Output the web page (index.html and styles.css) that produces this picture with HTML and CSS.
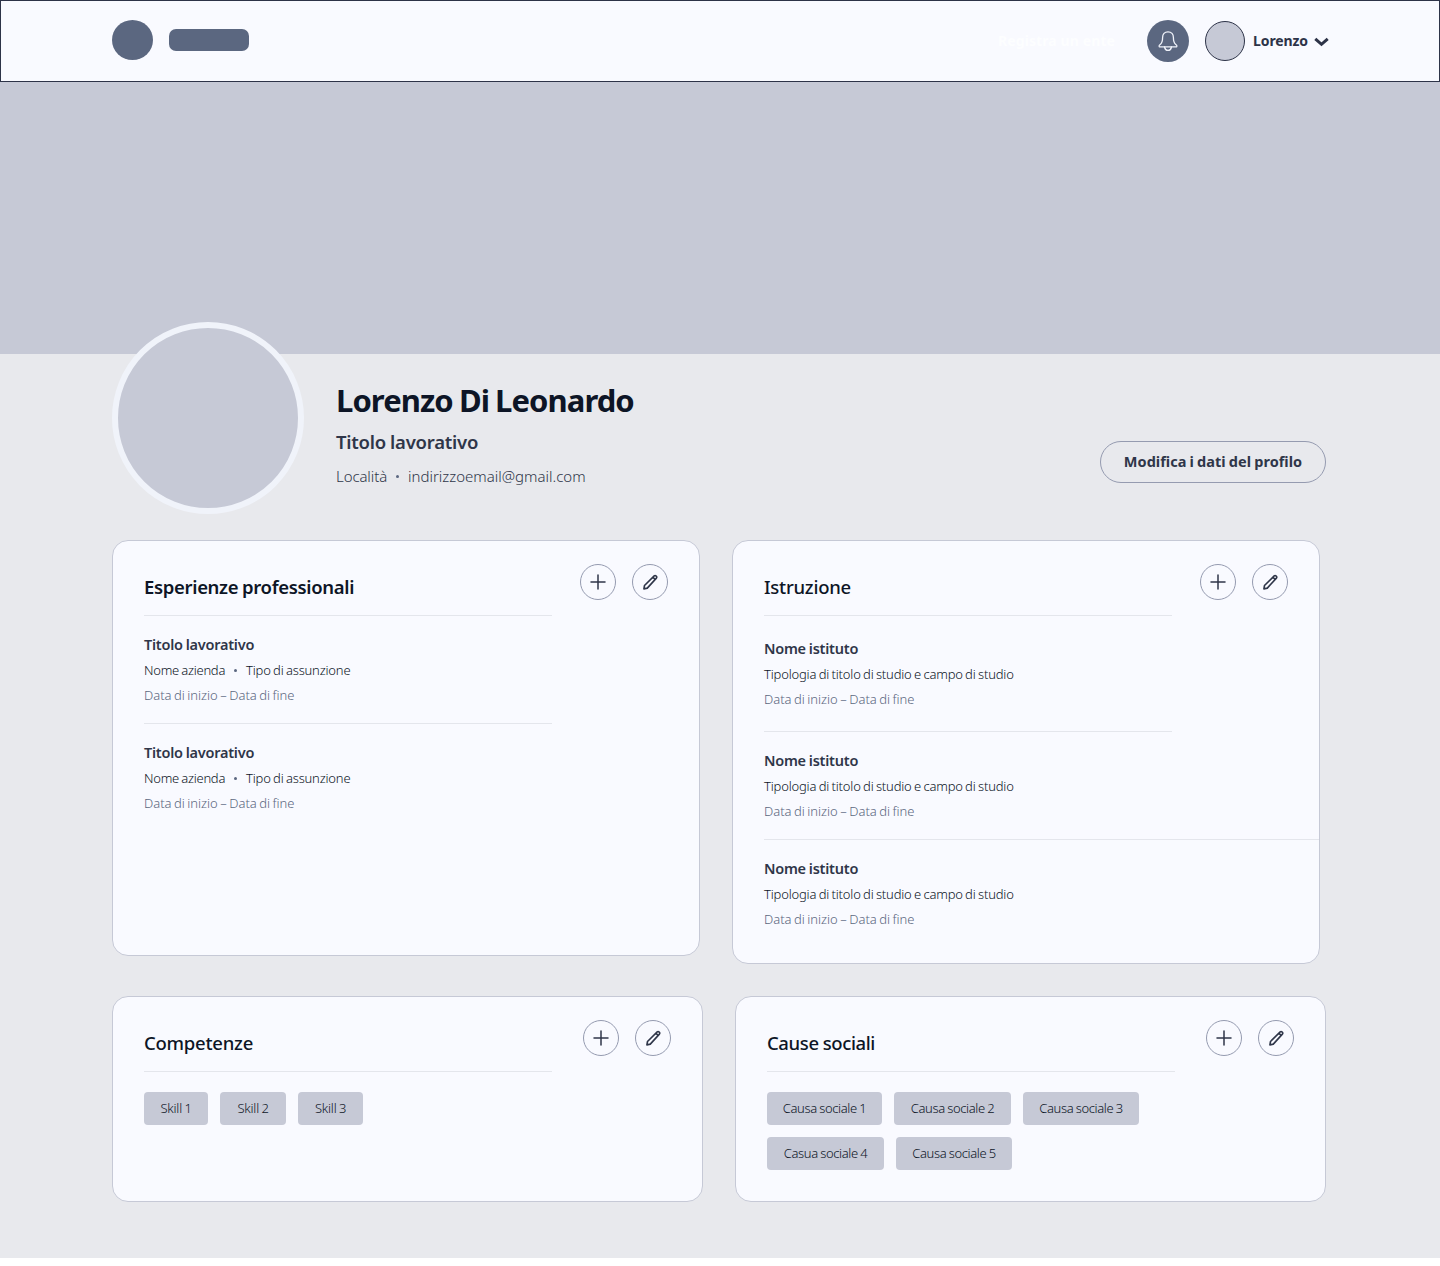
FILE: index.html
```
<!DOCTYPE html>
<html lang="it">
<head>
<meta charset="utf-8">
<title>Lorenzo Di Leonardo</title>
<link rel="stylesheet" href="styles.css">
</head>
<body>
<svg width="0" height="0" class="sprite" aria-hidden="true">
  <symbol id="plus" viewBox="0 0 16 16"><path d="M8 1v14M1 8h14" fill="none" stroke="currentColor" stroke-width="1.5" stroke-linecap="round"/></symbol>
  <symbol id="pencil" viewBox="0 0 16 16"><path d="M1.900 14.900 2.500 11.500 12.200 1.900q.9-.8 2 .2 1.100 1.100.2 2L5.300 14.100ZM11 3.300l2.100 2.100" fill="none" stroke="currentColor" stroke-width="1.600" stroke-linejoin="round" stroke-linecap="round"/></symbol>
</svg>
<header class="topbar">
  <div class="logo-mark"></div>
  <div class="logo-name"></div>
  <nav class="topnav">
    <a class="register">Registra un ente</a>
    <button class="bell" aria-label="Notifiche">
      <svg width="22" height="22" viewBox="0 0 22 22" fill="none" stroke="currentColor" stroke-width="1.3" stroke-linejoin="round" stroke-linecap="round"><path d="M11 1.800c-3.500 0-5.400 2.400-5.400 5.700 0 3.600-.5 5.500-2.400 6.900-1.500 1.100-1.400 2.500-.2 2.500h16c1.200 0 1.300-1.400-.2-2.500-1.900-1.400-2.400-3.300-2.400-6.900 0-3.300-1.900-5.700-5.400-5.700Z"/><path d="M7.500 17c.5 2.300 1.800 3.400 3.500 3.400s3-1.100 3.500-3.400"/></svg>
    </button>
    <div class="avatar-small"></div>
    <span class="user">Lorenzo</span>
    <svg class="chevron" width="16" height="10" viewBox="0 0 16 10"><path d="M2.300 1.800 8.500 7.300l6.200-5.500" fill="none" stroke="currentColor" stroke-width="3" stroke-linejoin="miter"/></svg>
  </nav>
</header>
<main class="page">
  <div class="cover"></div>
  <section class="profile">
    <div class="avatar"></div>
    <div class="identity">
      <h1>Lorenzo Di Leonardo</h1>
      <p class="role">Titolo lavorativo</p>
      <p class="contact"><span class="place">Località</span><i class="dot"></i><span>indirizzoemail@gmail.com</span></p>
    </div>
    <button class="edit">Modifica i dati del profilo</button>
  </section>

  <div class="cards">
    <section class="card jobs">
      <div class="content">
        <h2 class="strong">Esperienze professionali</h2>
        <article class="item">
          <h3>Titolo lavorativo</h3>
          <p class="line"><span class="company">Nome azienda</span><i class="dot"></i><span>Tipo di assunzione</span></p>
          <p class="dates">Data di inizio – Data di fine</p>
        </article>
        <article class="item">
          <h3>Titolo lavorativo</h3>
          <p class="line"><span class="company">Nome azienda</span><i class="dot"></i><span>Tipo di assunzione</span></p>
          <p class="dates">Data di inizio – Data di fine</p>
        </article>
      </div>
      <div class="actions">
        <button aria-label="Aggiungi"><svg width="16" height="16"><use href="#plus"/></svg></button>
        <button aria-label="Modifica"><svg width="16" height="16"><use href="#pencil"/></svg></button>
      </div>
    </section>

    <section class="card schools">
      <div class="content">
        <h2>Istruzione</h2>
        <article class="item roomy">
          <h3>Nome istituto</h3>
          <p class="line">Tipologia di titolo di studio e campo di studio</p>
          <p class="dates">Data di inizio – Data di fine</p>
        </article>
        <article class="item full">
          <h3>Nome istituto</h3>
          <p class="line">Tipologia di titolo di studio e campo di studio</p>
          <p class="dates">Data di inizio – Data di fine</p>
        </article>
        <article class="item">
          <h3>Nome istituto</h3>
          <p class="line">Tipologia di titolo di studio e campo di studio</p>
          <p class="dates">Data di inizio – Data di fine</p>
        </article>
      </div>
      <div class="actions">
        <button aria-label="Aggiungi"><svg width="16" height="16"><use href="#plus"/></svg></button>
        <button aria-label="Modifica"><svg width="16" height="16"><use href="#pencil"/></svg></button>
      </div>
    </section>
  </div>

  <div class="cards bottom">
    <section class="card">
      <div class="content">
        <h2>Competenze</h2>
        <div class="chips">
          <span class="chip w64">Skill 1</span>
          <span class="chip w66">Skill 2</span>
          <span class="chip w65">Skill 3</span>
        </div>
      </div>
      <div class="actions">
        <button aria-label="Aggiungi"><svg width="16" height="16"><use href="#plus"/></svg></button>
        <button aria-label="Modifica"><svg width="16" height="16"><use href="#pencil"/></svg></button>
      </div>
    </section>
    <section class="card">
      <div class="content">
        <h2 class="causes-title">Cause sociali</h2>
        <div class="chips causes">
          <span class="chip w115">Causa sociale 1</span>
          <span class="chip w117">Causa sociale 2</span>
          <span class="chip w116">Causa sociale 3</span>
          <span class="chip w117">Casua sociale 4</span>
          <span class="chip w116">Causa sociale 5</span>
        </div>
      </div>
      <div class="actions">
        <button aria-label="Aggiungi"><svg width="16" height="16"><use href="#plus"/></svg></button>
        <button aria-label="Modifica"><svg width="16" height="16"><use href="#pencil"/></svg></button>
      </div>
    </section>
  </div>
</main>
</body>
</html>
```
FILE: styles.css
```
* { box-sizing: border-box; }
body { margin: 0; background: #fff; color: #0d1526; font-family: "Noto Sans", sans-serif; }
h1, h2, h3, p { margin: 0; white-space: nowrap; }
button { padding: 0; background: none; font-family: inherit; color: #2f3649; }
svg { display: block; }
.sprite { position: absolute; }

.topbar { display: flex; align-items: flex-start; height: 82px; padding: 19px 110px 0 111px; background: #f9faff; border: 1px solid #2d3348; }
.logo-mark { width: 41px; height: 40px; border-radius: 50%; background: #5b6780; }
.logo-name { width: 80px; height: 22px; margin: 9px 0 0 16px; border-radius: 7px; background: #5b6780; }
.topnav { display: flex; align-items: center; height: 42px; margin-left: auto; }
.register { width: 118px; margin-right: 31px; padding-bottom: 2px; font-size: 14px; font-weight: 700; letter-spacing: .1px; color: #fdfeff; white-space: nowrap; }
.bell { display: grid; place-items: center; width: 42px; height: 42px; margin-right: 16px; border: 0; border-radius: 50%; background: #5b6780; color: #f0f3fa; }
.avatar-small { width: 40px; height: 40px; margin-right: 8px; border: 1px solid #2d3348; border-radius: 50%; background: #c6c9d6; }
.user { width: 60px; padding-bottom: 2px; font-size: 14px; font-weight: 700; letter-spacing: -.1px; color: #2d3348; }
.chevron { margin-top: 1px; color: #2d3348; }

.page { height: 1176px; background: #e8e9ed; }
.cover { height: 272px; background: #c6c9d6; }
.profile { display: flex; height: 186px; padding: 0 114px 0 112px; }
.avatar { flex: none; width: 192px; height: 192px; margin-top: -32px; border: 6px solid #f0f3fa; border-radius: 50%; background: #c6c9d6; }
.identity { padding: 26px 0 0 32px; }
h1 { font-size: 31px; line-height: 40px; font-weight: 700; letter-spacing: -.93px; word-spacing: -1px; }
.role { margin-top: 9px; font-size: 18.5px; line-height: 26px; font-weight: 600; letter-spacing: -.23px; word-spacing: -.5px; color: #2f3649; }
.contact { display: flex; align-items: center; margin-top: 9px; font-size: 15px; line-height: 24px; font-weight: 300; color: #2f3649; }
.place { width: 51px; letter-spacing: -.1px; }
.dot { width: 3px; height: 3px; margin: 1px 9px 0; border-radius: 50%; background: #5b6780; }
.edit { width: 226px; height: 42px; margin: 87px 0 0 auto; padding-bottom: 2px; border: 1px solid #959bb0; border-radius: 21px; font-size: 14.5px; font-weight: 700; letter-spacing: .02px; word-spacing: -.6px; }

.cards { display: grid; grid-template-columns: 588px 588px; gap: 32px; align-items: start; padding-left: 112px; }
.bottom { grid-template-columns: 591px 591px; margin-top: 32px; }
.card { display: flex; justify-content: space-between; height: 206px; padding: 0 31px; border: 1px solid #c6c9d6; border-radius: 16px; background: #f9faff; }
.jobs { height: 416px; }
.schools { height: 424px; }
.content { width: 408px; }
.actions { display: flex; gap: 16px; padding-top: 23px; }
.actions button { display: grid; place-items: center; width: 36px; height: 36px; border: 1px solid #959bb0; border-radius: 50%; }
h2 { height: 75px; padding-top: 33px; border-bottom: 1px solid #e4e6ec; font-size: 18.5px; line-height: 26px; font-weight: 500; letter-spacing: -.24px; }
h2.strong { font-weight: 600; letter-spacing: -.33px; word-spacing: -.7px; }
h2.causes-title { letter-spacing: -.38px; word-spacing: -.4px; }
.item { height: 108px; padding-top: 17px; border-bottom: 1px solid #e4e6ec; }
.item:last-child { border-bottom: 0; }
.item.roomy { height: 116px; padding-top: 21px; }
.item.full { width: 555px; }
h3 { font-size: 14.5px; line-height: 22px; font-weight: 600; letter-spacing: -.25px; word-spacing: -.5px; color: #2f3649; }
.line { display: flex; align-items: center; margin-top: 3px; font-size: 13px; line-height: 24px; font-weight: 300; letter-spacing: -.18px; word-spacing: -.8px; }
.company { width: 81px; letter-spacing: -.26px; }
.dates { margin-top: 1px; font-size: 13px; line-height: 24px; font-weight: 300; letter-spacing: -.03px; word-spacing: -.8px; color: #5b6780; }

.chips { display: flex; flex-wrap: wrap; gap: 12px; padding-top: 20px; }
.chip { height: 33px; border-radius: 4px; background: #c6c9d6; font-size: 13px; line-height: 33px; font-weight: 300; letter-spacing: -.2px; word-spacing: -.8px; text-align: center; white-space: nowrap; }
.causes .chip { letter-spacing: -.38px; word-spacing: -.5px; }
.w64 { width: 64px; }
.w65 { width: 65px; }
.w66 { width: 66px; }
.w115 { width: 115px; }
.w116 { width: 116px; }
.w117 { width: 117px; }
```
